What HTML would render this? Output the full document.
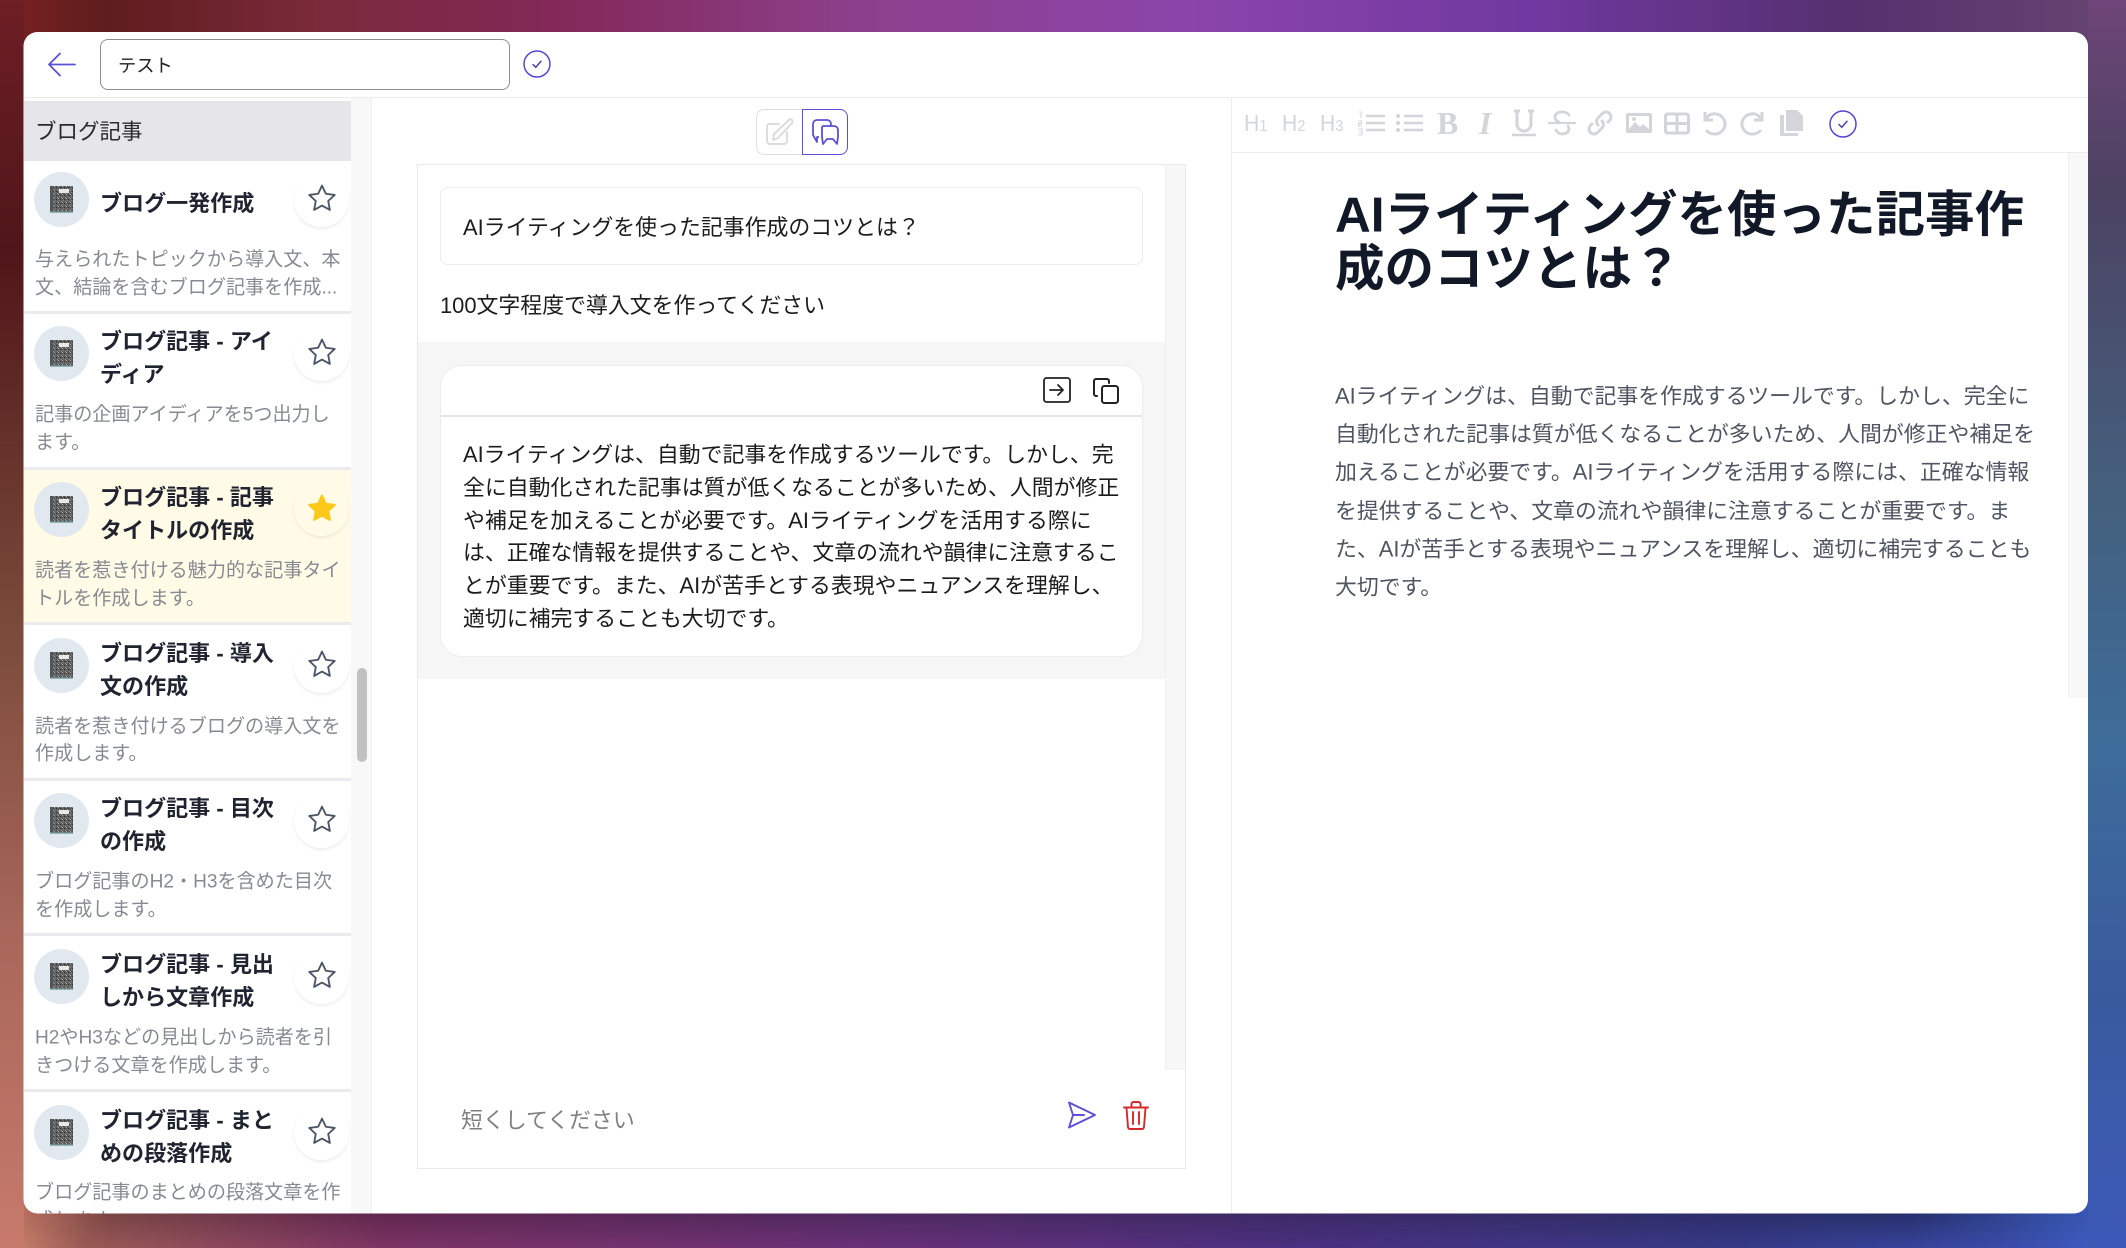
<!DOCTYPE html>
<html lang="ja"><head><meta charset="utf-8"><title>テスト</title>
<style>
*{box-sizing:border-box;margin:0;padding:0}
html,body{width:2126px;height:1248px;overflow:hidden;background:#4a2a60;font-family:"Liberation Sans","Noto Sans CJK JP",sans-serif}
.a{position:absolute}
.t{position:absolute;white-space:nowrap}
#win{position:absolute;left:0;top:0;width:2126px;height:1248px;background:#fff;clip-path:inset(32px 38px 34.5px 23.5px round 14px)}
.sep{position:absolute;left:24px;width:327px;height:3px;background:#ebebef}
.av{position:absolute;left:34px;width:55px;height:55px;border-radius:50%;background:#e2e8f0}
.av svg{position:absolute;left:16px;top:14px}
.sb{position:absolute;left:294px;width:55px;height:55px;border-radius:50%;background:#fff;box-shadow:0 2px 3px rgba(0,0,0,.07)}
.sb svg{position:absolute;left:13px;top:11px}
.ti{position:absolute;left:100px;font-size:22.05px;font-weight:700;line-height:33px;color:#1f2430;white-space:nowrap;transform:translateY(1.2px)}
.de{position:absolute;left:35px;font-size:19.1px;line-height:27.5px;color:#868a92;white-space:nowrap;transform:translateY(1.5px)}
.m{position:absolute;left:463px;font-size:21.88px;line-height:32.8px;color:#1c1c1c;white-space:nowrap;transform:translateY(1.8px)}
.p{position:absolute;left:1335px;font-size:21.88px;line-height:38.2px;color:#4f5662;white-space:nowrap;transform:translateY(1.5px)}
.h{position:absolute;left:1335px;font-size:49.5px;font-weight:700;line-height:54px;color:#111827;white-space:nowrap;transform:translateY(2.7px)}
.ic{position:absolute;top:109px}
.tx{position:absolute;color:#d3d5da;white-space:nowrap}
.tx small{font-size:16px}
</style></head><body>
<div class="a" style="left:0;top:0;width:2126px;height:60px;background:linear-gradient(90deg,#7a2220 0,#5f1d1e 5%,#7a2a3a 15%,#832858 26%,#8c3f8a 40%,#8b45ab 56%,#7038a0 72%,#55306f 87%,#664570 100%)"></div>
<div class="a" style="left:0;top:1190px;width:2126px;height:58px;background:linear-gradient(90deg,#d28a70 0,#9a5a55 4%,#7d3565 18%,#6b3078 40%,#4c3082 60%,#353a88 82%,#3a4aa8 94%,#4060c8 100%)"></div>
<div class="a" style="left:0;top:1190px;width:2126px;height:58px;background:linear-gradient(90deg,#c87a65 0,#7a4545 5%,#60264f 18%,#4f2a60 40%,#3d2a65 60%,#27306a 90%,#3a5fc0 100%);-webkit-mask-image:linear-gradient(180deg,#000 40%,transparent 100%);mask-image:linear-gradient(180deg,#000 40%,transparent 100%)"></div>
<div class="a" style="left:0;top:0;width:24px;height:1248px;background:linear-gradient(180deg,#6e1e25 0,#4f1619 20%,#7a4a3a 50%,#a8675a 75%,#c77a6c 100%)"></div>
<div class="a" style="left:2088px;top:0;width:38px;height:1248px;background:linear-gradient(180deg,#6e4578 0,#4c4262 15%,#44607e 40%,#3d6c9a 60%,#3a5a9e 80%,#3d59b8 100%)"></div>

<div id="win">
<svg style="position:absolute;width:0;height:0"><defs>
<pattern id="spk" width="4" height="4" patternUnits="userSpaceOnUse"><rect width="4" height="4" fill="#5a5a5a"/><rect x="0" y="0" width="1" height="1" fill="#aaa"/><rect x="2" y="1" width="1" height="1" fill="#333"/><rect x="3" y="3" width="1" height="1" fill="#999"/><rect x="1" y="2" width="1" height="1" fill="#888"/></pattern>
<symbol id="nb" viewBox="0 0 23 27"><rect width="23" height="27" rx="1" fill="url(#spk)"/><rect x="0" y="0" width="3" height="27" fill="#555"/><rect x="9" y="3" width="10" height="4" fill="#e8e8e8"/><rect x="0" y="25.5" width="23" height="1.5" fill="#8fb5b5"/></symbol>
<symbol id="st" viewBox="0 0 29 29"><path d="M14.5 2.5l3.7 7.9 8.6 1.1-6.3 5.900 1.600 8.600-7.600-4.200-7.600 4.200 1.600-8.600-6.300-5.900 8.600-1.100z" fill="none" stroke="#4b5563" stroke-width="1.800" stroke-linejoin="round"/></symbol>
<symbol id="sf" viewBox="0 0 29 29"><path d="M14.5 2.5l3.7 7.9 8.6 1.1-6.3 5.900 1.600 8.600-7.600-4.200-7.600 4.200 1.600-8.600-6.300-5.900 8.600-1.100z" fill="#fbc91a" stroke="#fbc91a" stroke-width="2" stroke-linejoin="round"/></symbol>
<symbol id="ck" viewBox="0 0 28 28"><circle cx="14" cy="14" r="13" fill="none" stroke="#5046d8" stroke-width="1.500"/><path d="M10 14.500l2.800 2.800 5.200-6" fill="none" stroke="#4a44a8" stroke-width="1.500" stroke-linecap="round" stroke-linejoin="round"/></symbol>
</defs></svg>

<!-- top bar -->
<svg class="a" style="left:46px;top:51px" width="30" height="28" viewBox="0 0 30 28"><path d="M29 13.5H3M14 2.500L3 13.500 14 24.500" fill="none" stroke="#5b50d6" stroke-width="1.800" stroke-linecap="round" stroke-linejoin="round"/></svg>
<div class="a" style="left:100px;top:39px;width:410px;height:51px;border:1.500px solid #8d8d8d;border-radius:8px"></div>
<div class="t" style="left:118px;top:51.500px;font-size:18.300px;line-height:27px;color:#222">テスト</div>
<svg class="a" style="left:523px;top:50px" width="28" height="28"><use href="#ck"/></svg>
<div class="a" style="left:24px;top:96.500px;width:2064px;height:1.500px;background:#ebebeb"></div>

<!-- left -->
<div class="a" style="left:24px;top:101px;width:327px;height:60px;background:#e5e5ea"></div>
<div class="t" style="left:35px;top:115.500px;font-size:21.500px;line-height:32px;color:#2a2a2a">ブログ記事</div>
<div class="a" style="left:24px;top:470px;width:327px;height:153px;background:#fffbe6"></div>
<div class="a" style="left:351px;top:98px;width:21px;height:1150px;background:#f8f8f8;border-right:1.500px solid #eeeeee"></div>
<div class="a" style="left:357px;top:668px;width:10px;height:94px;border-radius:5px;background:#c1c1c1"></div>
<div class="sep" style="top:311px"></div><div class="sep" style="top:467px"></div><div class="sep" style="top:622px"></div><div class="sep" style="top:778px"></div><div class="sep" style="top:933px"></div><div class="sep" style="top:1089px"></div>

<div class="av" style="top:172px"><svg width="23" height="27"><use href="#nb"/></svg></div>
<div class="ti" style="top:186px">ブログ一発作成</div>
<div class="sb" style="top:172px"><svg width="30" height="30"><use href="#st"/></svg></div>
<div class="de" style="top:245px">与えられたトピックから導入文、本<br>文、結論を含むブログ記事を作成...</div>

<div class="av" style="top:326px"><svg width="23" height="27"><use href="#nb"/></svg></div>
<div class="ti" style="top:324px">ブログ記事 - アイ<br>ディア</div>
<div class="sb" style="top:326px"><svg width="30" height="30"><use href="#st"/></svg></div>
<div class="de" style="top:400px">記事の企画アイディアを5つ出力し<br>ます。</div>

<div class="av" style="top:482px"><svg width="23" height="27"><use href="#nb"/></svg></div>
<div class="ti" style="top:480px">ブログ記事 - 記事<br>タイトルの作成</div>
<div class="sb" style="top:481px;background:#fffbe6"><svg style="top:12px" width="30" height="30"><use href="#sf"/></svg></div>
<div class="de" style="top:556px">読者を惹き付ける魅力的な記事タイ<br>トルを作成します。</div>

<div class="av" style="top:637.500px"><svg width="23" height="27"><use href="#nb"/></svg></div>
<div class="ti" style="top:635.500px">ブログ記事 - 導入<br>文の作成</div>
<div class="sb" style="top:637.500px"><svg width="30" height="30"><use href="#st"/></svg></div>
<div class="de" style="top:711.500px">読者を惹き付けるブログの導入文を<br>作成します。</div>

<div class="av" style="top:793px"><svg width="23" height="27"><use href="#nb"/></svg></div>
<div class="ti" style="top:791px">ブログ記事 - 目次<br>の作成</div>
<div class="sb" style="top:793px"><svg width="30" height="30"><use href="#st"/></svg></div>
<div class="de" style="top:867px">ブログ記事のH2・H3を含めた目次<br>を作成します。</div>

<div class="av" style="top:949px"><svg width="23" height="27"><use href="#nb"/></svg></div>
<div class="ti" style="top:947px">ブログ記事 - 見出<br>しから文章作成</div>
<div class="sb" style="top:949px"><svg width="30" height="30"><use href="#st"/></svg></div>
<div class="de" style="top:1023px">H2やH3などの見出しから読者を引<br>きつける文章を作成します。</div>

<div class="av" style="top:1105px"><svg width="23" height="27"><use href="#nb"/></svg></div>
<div class="ti" style="top:1103px">ブログ記事 - まと<br>めの段落作成</div>
<div class="sb" style="top:1105px"><svg width="30" height="30"><use href="#st"/></svg></div>
<div class="de" style="top:1178px">ブログ記事のまとめの段落文章を作<br>成します。</div>

<!-- toggle -->
<div class="a" style="left:756px;top:109px;width:47px;height:46px;border:1.500px solid #dedede;border-right:0;border-radius:8px 0 0 8px"></div>
<div class="a" style="left:802px;top:109px;width:46px;height:46px;border:1.500px solid #5b50d6;border-radius:0 8px 8px 0"></div>
<svg class="a" style="left:764px;top:116px" width="30" height="30" viewBox="0 0 30 30" fill="none" stroke="#dcdcdc" stroke-width="2" stroke-linecap="round" stroke-linejoin="round"><path d="M15 8H6a3 3 0 0 0-3 3v14a3 3 0 0 0 3 3h14a3 3 0 0 0 3-3v-9"/><path d="M26 3a2.500 2.500 0 0 1 2 4L14 22l-5 2 1-6z"/></svg>
<svg class="a" style="left:811px;top:118px" width="30" height="28" viewBox="0 0 30 28" fill="none" stroke="#5b50d6" stroke-width="1.800" stroke-linejoin="round"><path d="M8 19H6v5l-4-7V6a4 4 0 0 1 4-4h10a4 4 0 0 1 4 4v2"/><path d="M12 8h11a4 4 0 0 1 4 4v7l-1 7-4-5h-6l-4 5-1-7v-8a3 3 0 0 1 1-3z"/></svg>

<!-- chat -->
<div class="a" style="left:417px;top:164px;width:769px;height:1005px;border:1.500px solid #e9e9e9"></div>
<div class="a" style="left:1165px;top:165px;width:20px;height:905px;background:#f7f7f7;border-left:1px solid #f0f0f0"></div>
<div class="a" style="left:440px;top:187px;width:703px;height:78px;border:1.500px solid #ececec;border-radius:8px"></div>
<div class="t" style="left:463px;top:211.500px;font-size:21.900px;line-height:32px;color:#1c1c1c">AIライティングを使った記事作成のコツとは？</div>
<div class="t" style="left:440px;top:289.500px;font-size:21.900px;line-height:32px;color:#1c1c1c">100文字程度で導入文を作ってください</div>
<div class="a" style="left:418px;top:342px;width:747px;height:337px;background:#f6f6f6"></div>
<div class="a" style="left:440px;top:365px;width:703px;height:292px;background:#fff;border:1.500px solid #ececec;border-radius:22px"></div>
<div class="a" style="left:441px;top:415px;width:701px;height:1.500px;background:#e6e6e6"></div>
<svg class="a" style="left:1042px;top:376px" width="30" height="28" viewBox="0 0 30 28" fill="none" stroke="#222" stroke-width="1.800" stroke-linecap="round" stroke-linejoin="round"><rect x="2" y="2" width="26" height="24" rx="2.500"/><path d="M8 14h13M16 9l5 5-5 5"/></svg>
<svg class="a" style="left:1092px;top:377px" width="28" height="28" viewBox="0 0 28 28" fill="none" stroke="#222" stroke-width="2" stroke-linecap="round" stroke-linejoin="round"><path d="M5 19H4a2 2 0 0 1-2-2V4a2 2 0 0 1 2-2h11a2 2 0 0 1 2 2v2"/><rect x="10" y="9" width="16" height="17" rx="2.500"/></svg>
<div class="m" style="top:437px">AIライティングは、自動で記事を作成するツールです。しかし、完<br>全に自動化された記事は質が低くなることが多いため、人間が修正<br>や補足を加えることが必要です。AIライティングを活用する際に<br>は、正確な情報を提供することや、文章の流れや韻律に注意するこ<br>とが重要です。また、AIが苦手とする表現やニュアンスを理解し、<br>適切に補完することも大切です。</div>
<div class="t" style="left:461px;top:1104.500px;font-size:21.900px;line-height:32px;color:#808080">短くしてください</div>
<svg class="a" style="left:1067px;top:1101px" width="30" height="28" viewBox="0 0 30 28" fill="none" stroke="#5b50d6" stroke-width="1.900" stroke-linejoin="round" stroke-linecap="round"><path d="M2 1.500L28 14 2 26.500 6 14z"/><path d="M6 14h11"/></svg>
<svg class="a" style="left:1122px;top:1100px" width="28" height="31" viewBox="0 0 28 31" fill="none" stroke="#d42a2a" stroke-width="1.900" stroke-linecap="round" stroke-linejoin="round"><path d="M2 7.500h24M9.500 7V4a2 2 0 0 1 2-2h5a2 2 0 0 1 2 2v3"/><path d="M4.500 8l1.500 19a2 2 0 0 0 2 2h12a2 2 0 0 0 2-2l1.500-19"/><path d="M11 12v12M17 12v12"/></svg>

<!-- right -->
<div class="a" style="left:1230.500px;top:98px;width:1.500px;height:1150px;background:#ececec"></div>
<div class="a" style="left:1232px;top:151.500px;width:856px;height:1.500px;background:#ececec"></div>
<div class="a" style="left:2068px;top:153px;width:20px;height:545px;background:#f8f8f8;border-left:1.500px solid #eeeeee"></div>

<div class="tx" style="left:1244px;top:108px;font-size:23px;line-height:30px;transform-origin:left;transform:scaleX(.92)">H<small>1</small></div>
<div class="tx" style="left:1282px;top:108px;font-size:23px;line-height:30px;transform-origin:left;transform:scaleX(.92)">H<small>2</small></div>
<div class="tx" style="left:1320px;top:108px;font-size:23px;line-height:30px;transform-origin:left;transform:scaleX(.92)">H<small>3</small></div>
<svg class="ic" style="left:1357px" width="28" height="28" viewBox="0 0 28 28" fill="none" stroke="#d3d5da" stroke-width="2.500"><path d="M9 7h19M9 14h19M9 21h19"/><path d="M2 3h2v6M1.500 12h3v2.500h-3v2.500h3.500M1.500 20h3.500v6h-3.500M2 23h3" stroke-width="1"/></svg>
<svg class="ic" style="left:1395px" width="28" height="28" viewBox="0 0 28 28" fill="none" stroke="#d3d5da" stroke-width="2.500"><path d="M9 7h19M9 14h19M9 21h19"/><circle cx="3" cy="7" r="2" fill="#d3d5da" stroke="none"/><circle cx="3" cy="14" r="2" fill="#d3d5da" stroke="none"/><circle cx="3" cy="21" r="2" fill="#d3d5da" stroke="none"/></svg>
<div class="tx" style="left:1437px;top:105px;font:700 32px/36px 'Liberation Serif',serif">B</div>
<div class="tx" style="left:1479px;top:105px;font:italic 700 32px/36px 'Liberation Serif',serif">I</div>
<svg class="ic" style="left:1510px" width="28" height="28" viewBox="0 0 28 28" fill="none" stroke="#d3d5da" stroke-width="3"><path d="M7 2v13a7 7 0 0 0 14 0V2M4 2h6M18 2h6"/><path d="M2 26h24" stroke-width="2.500"/></svg>
<svg class="ic" style="left:1548px" width="28" height="28" viewBox="0 0 28 28" fill="none" stroke="#d3d5da" stroke-width="2.800" stroke-linecap="round"><path d="M21 6c-1-2-4-3-7-3-4 0-7 2-7 5 0 2 1 4 4 5M8 21c1 2 3 4 6 4 4 0 7-2 7-5 0-1-.5-2-1-3"/><path d="M1 14h26" stroke-width="2.300"/></svg>
<svg class="ic" style="left:1586px" width="28" height="28" viewBox="0 0 28 28" fill="none" stroke="#d3d5da" stroke-width="3" stroke-linecap="round"><path d="M12 16a5 5 0 0 1 0-7l5-5a5 5 0 0 1 7 7l-2 2"/><path d="M16 12a5 5 0 0 1 0 7l-5 5a5 5 0 0 1-7-7l2-2"/></svg>
<svg class="ic" style="left:1625px" width="28" height="28" viewBox="0 0 28 28"><path fill-rule="evenodd" fill="#d3d5da" d="M3 4h22a2 2 0 0 1 2 2v16a2 2 0 0 1-2 2H3a2 2 0 0 1-2-2V6a2 2 0 0 1 2-2zM4 20l6-7 5 5 3-3 6 5V7H4z"/><circle cx="9" cy="10" r="2" fill="#d3d5da"/></svg>
<svg class="ic" style="left:1663px" width="28" height="28" viewBox="0 0 28 28" fill="none" stroke="#d3d5da"><rect x="2.500" y="5" width="23" height="19" rx="2" stroke-width="3"/><path d="M2 14.500h24M14 5v19" stroke-width="3"/></svg>
<svg class="ic" style="left:1701px" width="28" height="28" viewBox="0 0 28 28" fill="none" stroke="#d3d5da" stroke-width="3"><path d="M4 3v8h8"/><path d="M4 11c3-5 7-7 11-6a10 10 0 0 1-2 20c-3 0-5-1-7-3" stroke-linecap="round"/></svg>
<svg class="ic" style="left:1738px" width="28" height="28" viewBox="0 0 28 28" fill="none" stroke="#d3d5da" stroke-width="3"><path d="M24 3v8h-8"/><path d="M24 11c-3-5-7-7-11-6a10 10 0 0 0 2 20c3 0 5-1 7-3" stroke-linecap="round"/></svg>
<svg class="ic" style="left:1777px" width="28" height="28" viewBox="0 0 28 28" fill="#d3d5da"><path d="M9 1h11l6 6v15H9z"/><path d="M3 6h4v18h14v3H3z"/></svg>
<svg class="a" style="left:1829px;top:110px" width="28" height="28"><use href="#ck"/></svg>

<div class="h" style="top:186px">AIライティングを使った記事作<br>成のコツとは？</div>
<div class="p" style="top:376px">AIライティングは、自動で記事を作成するツールです。しかし、完全に<br>自動化された記事は質が低くなることが多いため、人間が修正や補足を<br>加えることが必要です。AIライティングを活用する際には、正確な情報<br>を提供することや、文章の流れや韻律に注意することが重要です。ま<br>た、AIが苦手とする表現やニュアンスを理解し、適切に補完することも<br>大切です。</div>
</div>
</body></html>
